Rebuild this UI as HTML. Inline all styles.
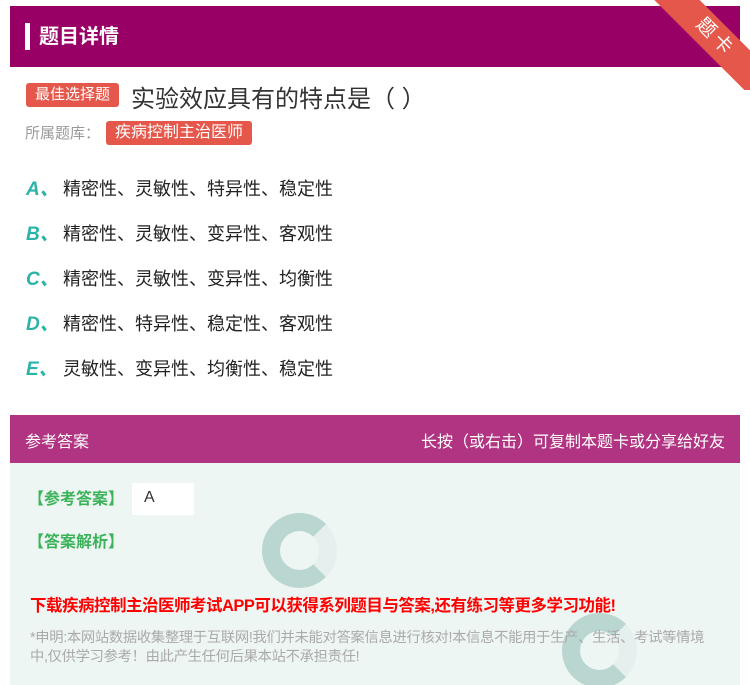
<!DOCTYPE html>
<html><head><meta charset="utf-8"><style>
*{margin:0;padding:0;box-sizing:border-box}
body{width:750px;height:685px;background:#fff;position:relative;overflow:hidden;font-family:"Liberation Sans","Noto Sans CJK SC",sans-serif}
.hd{position:absolute;left:10px;top:6px;width:730px;height:61px;background:#990066}
.hd .bar{position:absolute;left:15px;top:17px;width:5px;height:27px;background:#fff}
.hd .t{position:absolute;left:29px;top:14px;color:#fff;font-size:20px;font-weight:bold}
.rib{position:absolute;width:140px;height:32px;background:#e4574a;transform:rotate(45deg);color:#fff;font-size:19px;text-align:center;line-height:32px;letter-spacing:4px}
.tag{position:absolute;background:#e4574a;color:#fff;font-size:15px;border-radius:3px;padding:0 9px;line-height:24px}
.q{position:absolute;left:131px;top:79px;font-size:24px;color:#333}
.lib{position:absolute;left:25px;top:122px;color:#999;font-size:15px}
.opt{position:absolute;left:26px;font-size:18px;color:#222}
.opt b{color:#2bb3a8;font-style:italic;display:inline-block;width:37px;font-size:19px}
.ah{position:absolute;left:10px;top:415px;width:730px;height:48px;background:#b03482;color:#fff;font-size:16px}
.ab{position:absolute;left:10px;top:463px;width:730px;height:222px;background:#eef6f4;overflow:hidden}
.g{color:#3bb35a;font-weight:bold;font-size:16px;position:absolute}
</style></head><body>
<div class="hd"><div class="bar"></div><div class="t">题目详情</div></div>
<div style="position:absolute;left:650px;top:0;width:100px;height:90px;overflow:hidden"><div class="rib" style="left:-5px;top:22px">题卡</div></div>
<div class="tag" style="left:26px;top:83px">最佳选择题</div>
<div class="q">实验效应具有的特点是（ ）</div>
<div class="lib">所属题库：</div>
<div class="tag" style="left:106px;top:121px;font-size:16px">疾病控制主治医师</div>
<div class="opt" style="top:174px"><b>A、</b>精密性、灵敏性、特异性、稳定性</div>
<div class="opt" style="top:219px"><b>B、</b>精密性、灵敏性、变异性、客观性</div>
<div class="opt" style="top:264px"><b>C、</b>精密性、灵敏性、变异性、均衡性</div>
<div class="opt" style="top:309px"><b>D、</b>精密性、特异性、稳定性、客观性</div>
<div class="opt" style="top:354px"><b>E、</b>灵敏性、变异性、均衡性、稳定性</div>
<div class="ah"><span style="position:absolute;left:15px;top:13px">参考答案</span><span style="position:absolute;right:15px;top:13px">长按（或右击）可复制本题卡或分享给好友</span></div>
<div class="ab">
<div style="position:absolute;left:252px;top:50px;width:75px;height:75px;border-radius:50%;border:18px solid #b9d6d0;border-right-color:#e5f0ee"></div>
<div style="position:absolute;left:552px;top:150px;width:75px;height:75px;border-radius:50%;border:18px solid #b9d6d0;border-right-color:#e5f0ee"></div>
<div class="g" style="left:18px;top:22px">【参考答案】</div>
<div style="position:absolute;left:122px;top:20px;width:62px;height:32px;background:#fff;font-size:16px;color:#333;padding-left:12px;line-height:30px">A</div>
<div class="g" style="left:18px;top:65px">【答案解析】</div>
<div style="position:absolute;left:20px;top:129px;color:#f00;font-weight:bold;font-size:16.5px;letter-spacing:-0.5px;white-space:nowrap">下载疾病控制主治医师考试APP可以获得系列题目与答案,还有练习等更多学习功能!</div>
<div style="position:absolute;left:20px;top:166px;width:690px;color:#aaa;font-size:14.3px;line-height:19px;letter-spacing:-0.3px">*申明:本网站数据收集整理于互联网!我们并未能对答案信息进行核对!本信息不能用于生产、生活、考试等情境中,仅供学习参考！由此产生任何后果本站不承担责任!</div>
</div>
</body></html>
